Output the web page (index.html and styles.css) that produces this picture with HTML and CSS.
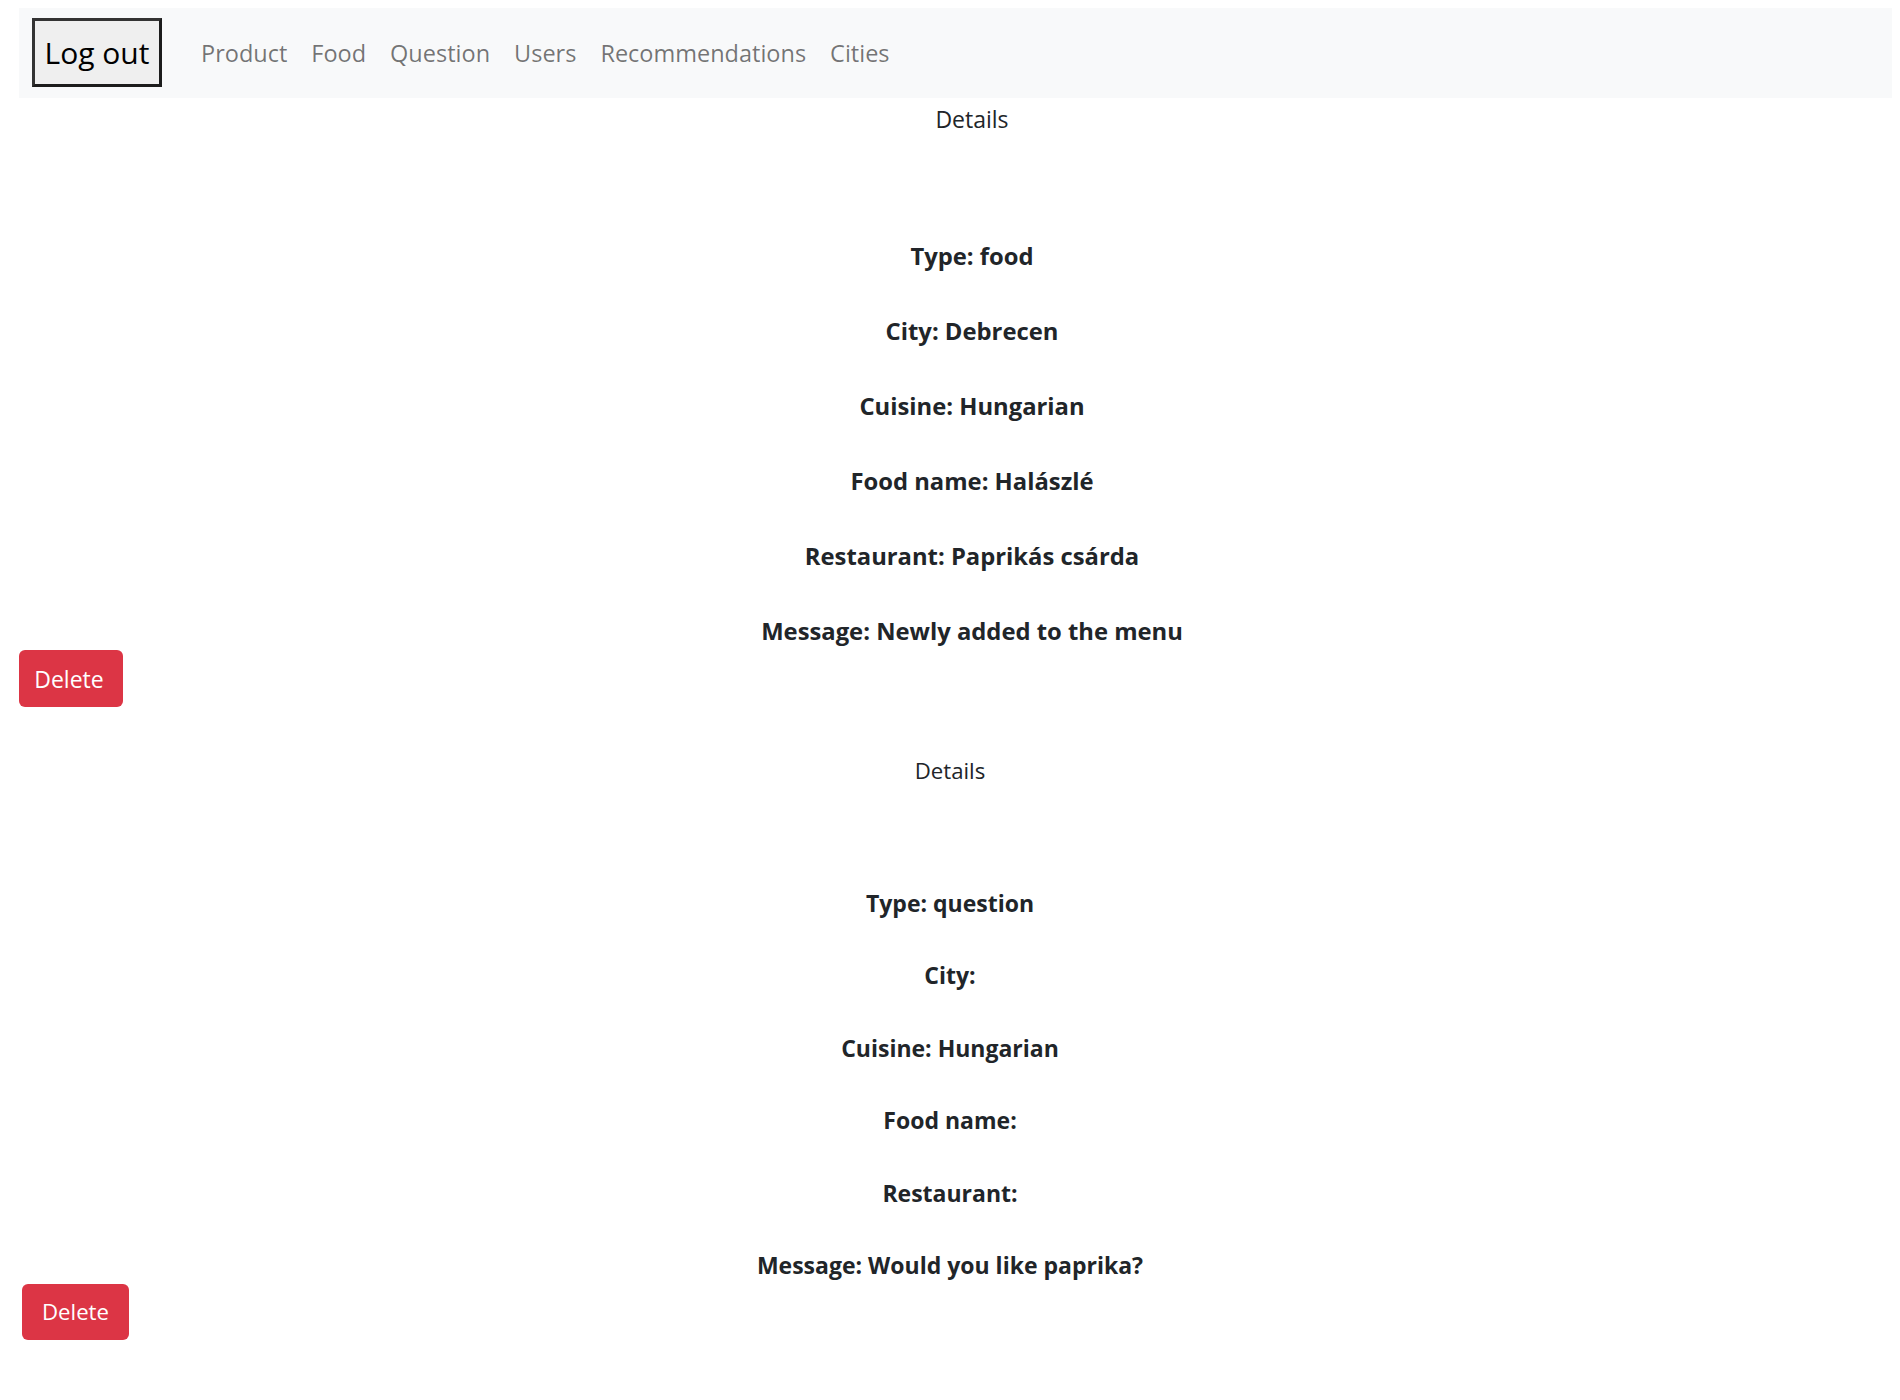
FILE: index.html
```html
<!DOCTYPE html>
<html lang="en">
<head>
<meta charset="utf-8">
<title>Details</title>
<link rel="stylesheet" href="styles.css">
</head>
<body>
<nav class="navbar">
  <button class="logout">Log out</button>
  <a class="nav-link" href="#">Product</a>
  <a class="nav-link" href="#">Food</a>
  <a class="nav-link" href="#">Question</a>
  <a class="nav-link" href="#">Users</a>
  <a class="nav-link" href="#">Recommendations</a>
  <a class="nav-link" href="#">Cities</a>
</nav>

<section class="post post-first">
  <p class="title">Details</p>
  <div class="fields">
    <p class="field">Type: food</p>
    <p class="field">City: Debrecen</p>
    <p class="field">Cuisine: Hungarian</p>
    <p class="field">Food name: Halászlé</p>
    <p class="field">Restaurant: Paprikás csárda</p>
    <p class="field">Message: Newly added to the menu</p>
  </div>
  <button class="delete">Delete</button>
</section>

<section class="post post-second">
  <p class="title">Details</p>
  <div class="fields">
    <p class="field">Type: question</p>
    <p class="field">City:</p>
    <p class="field">Cuisine: Hungarian</p>
    <p class="field">Food name:</p>
    <p class="field">Restaurant:</p>
    <p class="field">Message: Would you like paprika?</p>
  </div>
  <button class="delete">Delete</button>
</section>
</body>
</html>
```

FILE: styles.css
```css
html, body {
  margin: 0;
  padding: 0;
  background: #fff;
}

body {
  font-family: "Open Sans", "Noto Sans", sans-serif;
  color: #212529;
  font-size: 23px;
}

.navbar {
  display: flex;
  align-items: center;
  margin: 8px 8px 0 19px;
  height: 90px;
  padding: 0 12px 0 13px;
  background: #f8f9fa;
  box-sizing: border-box;
}

.logout {
  font-family: "Open Sans", sans-serif;
  font-size: 30px;
  color: #000;
  background: #efefef;
  border: 3px solid #1c1c1c;
  border-top-color: #333;
  border-left-color: #333;
  padding: 0;
  width: 130px;
  height: 69px;
  margin: -2px 27px 0 0;
}

.nav-link {
  color: rgba(0, 0, 0, 0.55);
  text-decoration: none;
  padding: 0 12px;
  line-height: 36px;
  font-size: 23.5px;
}

.post {
  display: flex;
  flex-direction: column;
}

.title {
  margin: 3px 0 0;
  line-height: 36px;
  text-align: center;
}

.fields {
  display: flex;
  flex-direction: column;
  gap: 39px;
  margin-top: 101px;
}

.field {
  margin: 0;
  line-height: 36px;
  text-align: center;
  font-weight: 700;
  font-size: 23.8px;
}

.delete {
  align-self: flex-start;
  font-family: "Open Sans", sans-serif;
  font-size: 23px;
  color: #fff;
  background: #dc3545;
  border: none;
  border-radius: 6px;
  width: 104px;
  height: 57px;
  padding: 0 4px 0 0;
  margin-top: 1px;
}

.post-first {
  padding-left: 44px;
}

.post-first .delete {
  margin-left: -25px;
}

.post-second {
  margin-top: 43px;
  font-size: 22.2px;
}

.post-second .fields {
  gap: 36.4px;
  margin-top: 96px;
}

.post-second .field {
  font-size: 23px;
}

.post-second .delete {
  margin-left: 22px;
  width: 107px;
  height: 56px;
  font-size: 22.2px;
  padding: 0;
}
```
